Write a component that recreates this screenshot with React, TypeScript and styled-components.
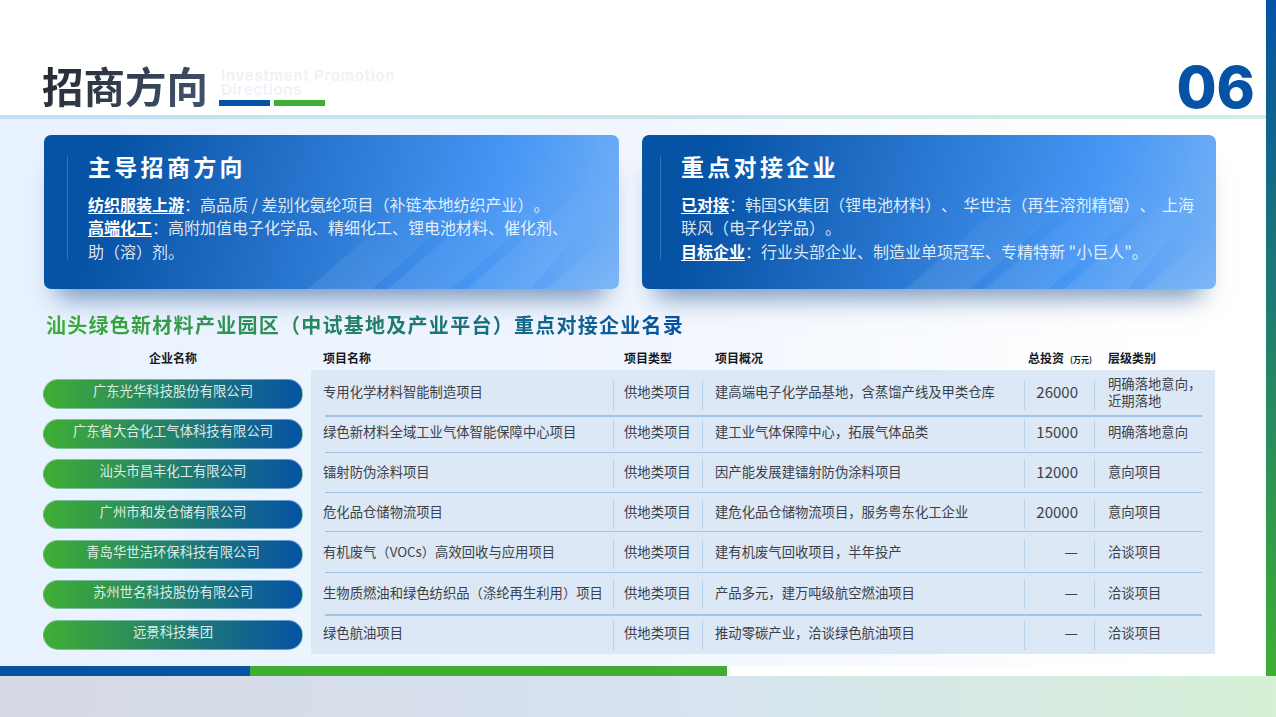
import * as React from "react";
import styled, { createGlobalStyle } from "styled-components";

const blue = "#0652a5";
const green = "#3fae33";
const cjk = `"Noto Sans CJK SC", "Noto Sans", sans-serif`;

const GlobalStyle = createGlobalStyle`
  html, body {
    margin: 0;
    padding: 0;
    background: #fff;
    overflow: hidden;
  }
`;

const Page = styled.div`
  width: 1276px;
  height: 717px;
  display: flex;
  flex-direction: column;
  font-family: ${cjk};
  text-spacing-trim: space-all;
  overflow: hidden;
`;

const Upper = styled.div`
  height: 676px;
  display: flex;
`;

const Main = styled.div`
  flex: 1;
  min-width: 0;
  display: flex;
  flex-direction: column;
`;

const SideBar = styled.div`
  width: 10px;
  background: linear-gradient(180deg, ${blue} 0%, ${green} 100%);
`;

const Header = styled.header`
  height: 115px;
  flex: none;
  box-sizing: border-box;
  padding: 0 11px 0 42px;
  display: flex;
  align-items: flex-start;
  background: #fff;
`;

const Title = styled.h1`
  margin: 56px 0 0;
  font-size: 41.5px;
  line-height: 58px;
  font-weight: 700;
  background: linear-gradient(135deg, #23272e 0%, #435670 100%);
  -webkit-background-clip: text;
  background-clip: text;
  color: transparent;
`;

const TitleSide = styled.div`
  margin: 69px 0 0 11px;
  width: 190px;
`;

const EnglishTitle = styled.div`
  padding-left: 2px;
  font-family: Inter, sans-serif;
  font-size: 15px;
  line-height: 14px;
  font-weight: 600;
  letter-spacing: 0.75px;
  color: #eef2f7;
`;

const TitleBars = styled.div`
  display: flex;
  gap: 4px;
  margin-top: 3px;
`;

const TitleBar = styled.span<{ $color: string }>`
  width: 51px;
  height: 6px;
  background: ${(p) => p.$color};
`;

const PageNumber = styled.div`
  margin: 52px 0 0 auto;
  font-family: Inter, sans-serif;
  font-size: 58px;
  line-height: 70px;
  font-weight: 800;
  color: ${blue};
`;

const HeaderRule = styled.div`
  height: 4px;
  flex: none;
  background: linear-gradient(90deg, #c4def9 0%, #c8e5ea 55%, #d2f0dc 100%);
`;

const Content = styled.main`
  flex: 1;
  min-height: 0;
  box-sizing: border-box;
  padding: 16px 50px 0 44px;
  background: linear-gradient(90deg, #e8f2fe 0%, #f1f6fe 50%, #ffffff 92%);
`;

const Cards = styled.section`
  display: grid;
  grid-template-columns: 575px 574px;
  gap: 23px;
`;

const Card = styled.article<{ $inset: number }>`
  position: relative;
  height: 154px;
  box-sizing: border-box;
  padding: 23px 0 0 ${(p) => p.$inset}px;
  border-radius: 7px;
  background: linear-gradient(105deg, ${blue} 12%, #4696f4 76%, #76b2f6 100%);
  box-shadow: 0 22px 24px -14px rgba(6, 62, 130, 0.55);
`;

const Streaks = styled.svg`
  position: absolute;
  inset: 0;
  width: 100%;
  height: 100%;
  border-radius: 7px;
`;

const CardInner = styled.div`
  position: relative;
  height: 103px;
  padding-left: 20px;
  border-left: 1px solid rgba(255, 255, 255, 0.2);
`;

const CardTitle = styled.h2`
  margin: -2px 0 0;
  font-size: 23px;
  line-height: 20px;
  font-weight: 700;
  letter-spacing: 3.3px;
  color: #fff;
`;

const CardText = styled.p`
  margin: 17px 0 0;
  font-size: 16px;
  line-height: 23.4px;
  white-space: nowrap;
  color: rgba(255, 255, 255, 0.86);
`;

const Lead = styled.strong`
  font-weight: 700;
  color: #fff;
  text-decoration: underline;
  text-underline-offset: 2px;
`;

const Pause = styled.span`
  margin-right: 6.5px;
`;

const SectionTitle = styled.h2`
  margin: 21px 0 0 2px;
  width: max-content;
  font-size: 20px;
  line-height: 30px;
  font-weight: 700;
  letter-spacing: 1.27px;
  background: linear-gradient(90deg, ${green} 0%, ${blue} 100%);
  -webkit-background-clip: text;
  background-clip: text;
  color: transparent;
`;

const Directory = styled.section`
  display: grid;
  grid-template-columns: 260px 904px;
  column-gap: 8px;
  margin: 6px 0 0 -1px;
`;

const ColumnHead = styled.div<{ $center?: boolean }>`
  height: 24px;
  font-size: 12px;
  line-height: 24px;
  font-weight: 700;
  color: #16191e;
  text-align: ${(p) => (p.$center ? "center" : "left")};
`;

const ProjectHead = styled(ColumnHead)`
  display: grid;
  grid-template-columns: 301px 91px 313px 80px 1fr;
  padding-left: 12px;
`;

const Unit = styled.small`
  margin-left: 6px;
  font-size: 8px;
  font-weight: 700;
`;

const Pills = styled.div`
  display: flex;
  flex-direction: column;
  gap: 10.7px;
  padding-top: 9px;
`;

const Pill = styled.div`
  height: 29.5px;
  box-sizing: border-box;
  border-radius: 15px;
  border: 1px solid rgba(190, 220, 250, 0.5);
  background: linear-gradient(90deg, ${green} 0%, ${blue} 100%);
  font-size: 13.35px;
  line-height: 22px;
  text-align: center;
  color: rgba(255, 255, 255, 0.86);
`;

const Panel = styled.div`
  height: 284px;
  padding: 0 13px 0 14px;
  background: #dce8f5;
`;

const Row = styled.div<{ $height: number; $top: number; $rule: number }>`
  height: ${(p) => p.$height}px;
  box-sizing: border-box;
  padding-top: ${(p) => p.$top}px;
  border-bottom: ${(p) => p.$rule}px solid #a3c3e6;
  display: grid;
  grid-template-columns: 288px 89px 322px 70px 1fr;
  grid-auto-rows: 29px;
  font-size: 13.33px;
  color: #3c4149;
`;

const Cell = styled.div<{ $lift: number }>`
  display: flex;
  align-items: center;
  box-sizing: border-box;
  padding: 0 0 ${(p) => p.$lift * 2}px 10px;
  border-left: 1px solid #b8d0ea;
  line-height: 17px;
  white-space: pre-line;
`;

const NameCell = styled(Cell)`
  margin-left: -2px;
  padding-left: 0;
  border-left: none;
`;

const BriefCell = styled(Cell)`
  padding-left: 12px;
`;

const MoneyCell = styled(Cell)`
  justify-content: flex-end;
  padding-left: 0;
  padding-right: 16px;
  font-size: 15px;
`;

const LevelCell = styled(Cell)`
  padding-left: 13px;
`;

const rows = [
  { name: "专用化学材料智能制造项目", brief: "建高端电子化学品基地，含蒸馏产线及甲类仓库", money: "26000", level: "明确落地意向，\n近期落地", height: 47, top: 11, rule: 2, lift: 4 },
  { name: "绿色新材料全域工业气体智能保障中心项目", brief: "建工业气体保障中心，拓展气体品类", money: "15000", level: "明确落地意向", height: 36, top: 3, rule: 1, lift: 3 },
  { name: "镭射防伪涂料项目", brief: "因产能发展建镭射防伪涂料项目", money: "12000", level: "意向项目", height: 40, top: 6, rule: 1, lift: 2 },
  { name: "危化品仓储物流项目", brief: "建危化品仓储物流项目，服务粤东化工企业", money: "20000", level: "意向项目", height: 39, top: 7, rule: 1, lift: 3 },
  { name: "有机废气（VOCs）高效回收与应用项目", brief: "建有机废气回收项目，半年投产", money: "—", level: "洽谈项目", height: 41, top: 8, rule: 1, lift: 3 },
  { name: "生物质燃油和绿色纺织品（涤纶再生利用）项目", brief: "产品多元，建万吨级航空燃油项目", money: "—", level: "洽谈项目", height: 43, top: 7, rule: 2, lift: 2 },
  { name: "绿色航油项目", brief: "推动零碳产业，洽谈绿色航油项目", money: "—", level: "洽谈项目", height: 38, top: 5, rule: 0, lift: 3 },
];

const companies = [
  "广东光华科技股份有限公司",
  "广东省大合化工气体科技有限公司",
  "汕头市昌丰化工有限公司",
  "广州市和发仓储有限公司",
  "青岛华世洁环保科技有限公司",
  "苏州世名科技股份有限公司",
  "远景科技集团",
];

const AccentBar = styled.div`
  height: 10px;
  flex: none;
  width: 727px;
  display: flex;
  background: ${green};
`;

const AccentBlue = styled.span`
  width: 250px;
  background: ${blue};
`;

const BottomBand = styled.footer`
  height: 41px;
  flex: none;
  background: linear-gradient(90deg, #d5d9e4 0%, #d7e3f0 55%, #d5f0d6 100%);
`;

const CardStreaks: React.FC<{ id: string }> = ({ id }) => (
  <Streaks viewBox="0 0 575 154" preserveAspectRatio="none" aria-hidden="true">
    <defs>
      <linearGradient id={id} x1="0" y1="1" x2="0.35" y2="0">
        <stop offset="0" stopColor="#fff" stopOpacity="0.09" />
        <stop offset="1" stopColor="#fff" stopOpacity="0" />
      </linearGradient>
    </defs>
    <path d="M264 154 L408 28 L472 28 L328 154 Z" fill={`url(#${id})`} />
    <path d="M344 154 L488 28 L552 28 L407 154 Z" fill={`url(#${id})`} />
    <path d="M423 154 L567 28 L575 28 L575 46 L487 154 Z" fill={`url(#${id})`} />
    <path d="M503 154 L575 90 L575 154 Z" fill={`url(#${id})`} />
  </Streaks>
);

export default function App() {
  return (
    <Page>
      <GlobalStyle />
      <Upper>
        <Main>
          <Header>
            <Title>招商方向</Title>
            <TitleSide>
              <EnglishTitle>Investment Promotion Directions</EnglishTitle>
              <TitleBars>
                <TitleBar $color={blue} />
                <TitleBar $color={green} />
              </TitleBars>
            </TitleSide>
            <PageNumber>06</PageNumber>
          </Header>
          <HeaderRule />
          <Content>
            <Cards>
              <Card $inset={23}>
                <CardStreaks id="streak-left" />
                <CardInner>
                  <CardTitle>主导招商方向</CardTitle>
                  <CardText>
                    <Lead>纺织服装上游</Lead>：高品质 / 差别化氨纶项目（补链本地纺织产业）。
                    <br />
                    <Lead>高端化工</Lead>：高附加值电子化学品、精细化工、锂电池材料、催化剂、
                    <br />
                    助（溶）剂。
                  </CardText>
                </CardInner>
              </Card>
              <Card $inset={18}>
                <CardStreaks id="streak-right" />
                <CardInner>
                  <CardTitle>重点对接企业</CardTitle>
                  <CardText>
                    <Lead>已对接</Lead>：韩国SK集团（锂电池材料）<Pause>、</Pause>华世洁（再生溶剂精馏）<Pause>、</Pause>上海
                    <br />
                    联风（电子化学品）。
                    <br />
                    <Lead>目标企业</Lead>：行业头部企业、制造业单项冠军、专精特新 "小巨人"。
                  </CardText>
                </CardInner>
              </Card>
            </Cards>
            <SectionTitle>
              汕头绿色新材料产业园区（中试基地及产业平台）重点对接企业名录
            </SectionTitle>
            <Directory>
              <div>
                <ColumnHead $center>企业名称</ColumnHead>
                <Pills>
                  {companies.map((name) => (
                    <Pill key={name}>{name}</Pill>
                  ))}
                </Pills>
              </div>
              <div>
                <ProjectHead>
                  <span>项目名称</span>
                  <span>项目类型</span>
                  <span>项目概况</span>
                  <span>
                    总投资<Unit>(万元)</Unit>
                  </span>
                  <span>层级类别</span>
                </ProjectHead>
                <Panel>
                  {rows.map((row) => (
                    <Row key={row.name} $height={row.height} $top={row.top} $rule={row.rule}>
                      <NameCell $lift={row.lift}>{row.name}</NameCell>
                      <Cell $lift={row.lift}>供地类项目</Cell>
                      <BriefCell $lift={row.lift}>{row.brief}</BriefCell>
                      <MoneyCell $lift={row.lift}>{row.money}</MoneyCell>
                      <LevelCell $lift={row.lift}>{row.level}</LevelCell>
                    </Row>
                  ))}
                </Panel>
              </div>
            </Directory>
          </Content>
          <AccentBar>
            <AccentBlue />
          </AccentBar>
        </Main>
        <SideBar />
      </Upper>
      <BottomBand />
    </Page>
  );
}
